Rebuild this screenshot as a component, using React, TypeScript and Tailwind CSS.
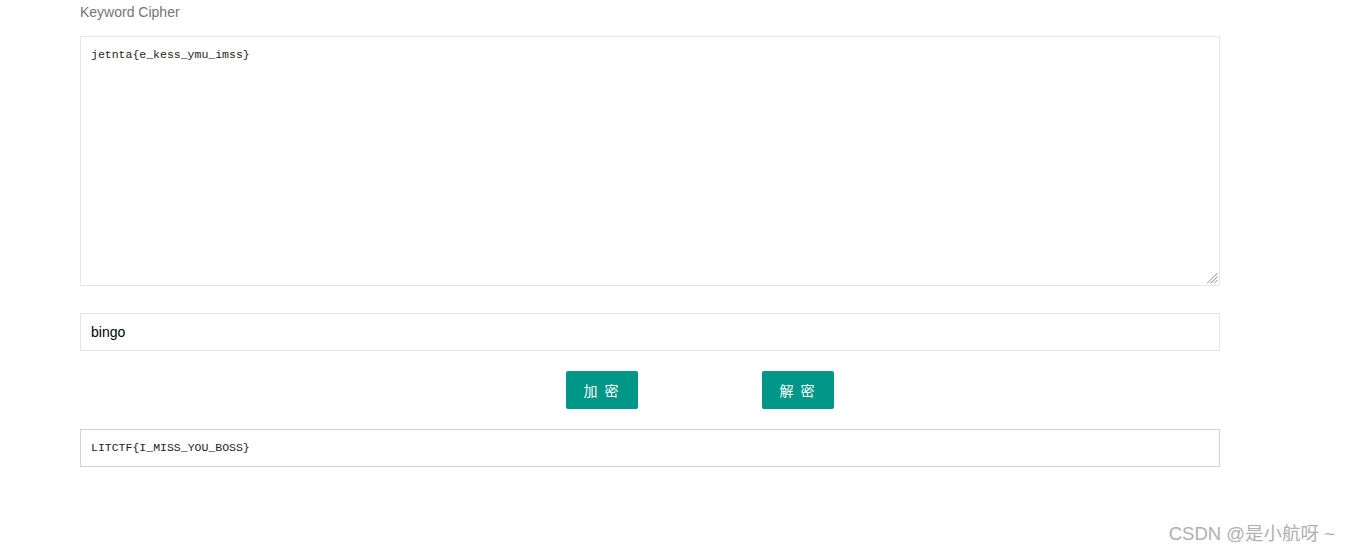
import React from "react";

function ResizeGrip() {
  return (
    <svg className="pointer-events-none absolute bottom-[2px] right-[2px]" width="13" height="13" viewBox="0 0 13 13">
      <g stroke="#8a8a8a" strokeWidth="1">
        <line x1="12.5" y1="2" x2="2" y2="12.5" />
        <line x1="12.5" y1="5.5" x2="5.5" y2="12.5" />
        <line x1="12.5" y1="9" x2="9" y2="12.5" />
      </g>
    </svg>
  );
}

export default function App() {
  return (
    <div className="relative min-h-[553px] w-full bg-white font-['Liberation_Sans',Arial,sans-serif]">
      <div className="ml-[80px] w-[1140px] pt-[2px]">
        <div className="h-[20px] text-[14px] leading-[20px] text-[#757575]">Keyword Cipher</div>
        <div className="relative mt-[14px]">
          <textarea
            readOnly
            value="jetnta{e_kess_ymu_imss}"
            className="block h-[250px] w-full resize-none border border-[#e6e6e6] bg-white px-[10px] py-[10px] font-['Liberation_Mono','Courier_New',monospace] text-[11.5px] leading-[16px] text-[#222] outline-none"
          />
          <ResizeGrip />
        </div>
        <div className="mt-[27px] flex h-[38px] items-center border border-[#e6e6e6] px-[10px] text-[14px] text-black">
          bingo
        </div>
        <div className="mt-[20px] flex gap-[124px] pl-[486px]">
          <button className="h-[38px] w-[72px] rounded-[2px] bg-[#009688] font-['Noto_Sans_CJK_SC',sans-serif] text-[14px] tracking-[2px] text-white">
            加 密
          </button>
          <button className="h-[38px] w-[72px] rounded-[2px] bg-[#009688] font-['Noto_Sans_CJK_SC',sans-serif] text-[14px] tracking-[2px] text-white">
            解 密
          </button>
        </div>
        <div className="mt-[20px] flex h-[38px] items-center border border-[#d2d2d2] px-[10px] font-['Liberation_Mono','Courier_New',monospace] text-[11.5px] text-[#222]">
          LITCTF{"{"}I_MISS_YOU_BOSS{"}"}
        </div>
      </div>
      <div className="absolute bottom-[7px] right-[14px] font-['Liberation_Sans','Noto_Sans_CJK_SC',sans-serif] text-[18.5px] leading-[24px] text-[#b0b0b0] [text-shadow:0_0_1px_#fff]">
        CSDN @是小航呀 ~
      </div>
    </div>
  );
}
